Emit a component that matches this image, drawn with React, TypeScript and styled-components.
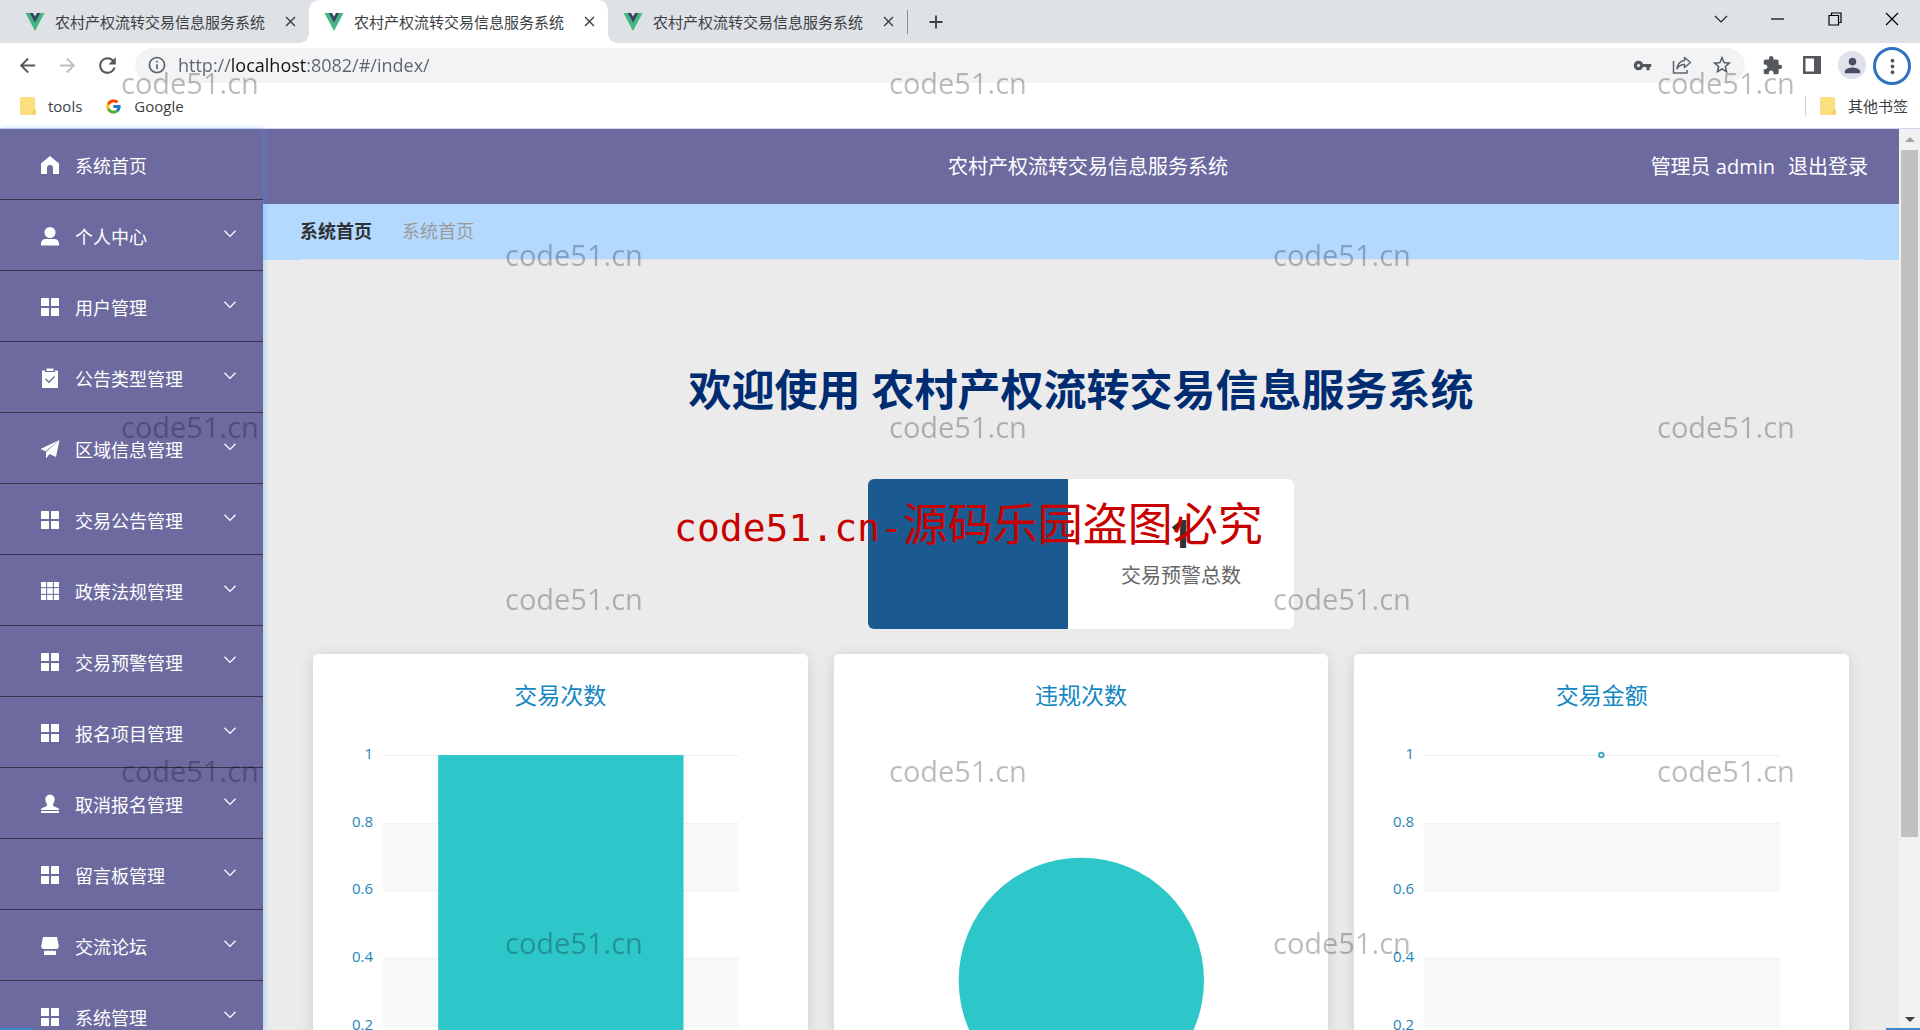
import React from 'react';
import styled, { createGlobalStyle, css } from 'styled-components';
import {
  MdArrowBack,
  MdArrowForward,
  MdRefresh,
  MdInfoOutline,
  MdVpnKey,
  MdStarBorder,
  MdExtension,
  MdPerson,
  MdMoreVert,
  MdAdd,
  MdClose,
} from 'react-icons/md';
import { FcGoogle } from 'react-icons/fc';

const SYSTEM_NAME = '农村产权流转交易信息服务系统';

const GlobalStyle = createGlobalStyle`
  * { box-sizing: border-box; }
  body {
    margin: 0;
    font-family: "Open Sans", "Noto Sans CJK SC", sans-serif;
    color: #333;
    overflow: hidden;
  }
  button {
    border: 0;
    padding: 0;
    background: none;
    font: inherit;
    color: inherit;
    cursor: pointer;
  }
  a { color: inherit; text-decoration: none; }
  h1, h2, p, ul { margin: 0; padding: 0; }
  ul { list-style: none; }
`;

/* ---------- browser window ---------- */

const Window = styled.div`
  position: relative;
  display: flex;
  flex-direction: column;
  height: 100vh;
  overflow: hidden;
  background: #fff;
`;

const TabStrip = styled.div`
  display: flex;
  align-items: stretch;
  flex: none;
  height: 43px;
  padding-left: 10px;
  background: #dee1e6;
`;

const corner = css`
  content: '';
  position: absolute;
  bottom: 0;
  width: 10px;
  height: 10px;
`;

const Tab = styled.div<{ $active?: boolean }>`
  position: relative;
  display: flex;
  align-items: center;
  gap: 10px;
  width: 299px;
  padding: 0 10px 0 15px;
  border-radius: 10px 10px 0 0;
  background: ${(p) => (p.$active ? '#fff' : 'transparent')};
  ${(p) =>
    p.$active &&
    css`
      &::before {
        ${corner}
        right: 100%;
        background: radial-gradient(circle at 0 0, transparent 10px, #fff 10px);
      }
      &::after {
        ${corner}
        left: 100%;
        background: radial-gradient(circle at 100% 0, transparent 10px, #fff 10px);
      }
    `}
`;

const TabTitle = styled.button`
  flex: 1;
  font-size: 15px;
  line-height: 20px;
  text-align: left;
  white-space: nowrap;
  color: #3c4043;
`;

const TabClose = styled.button`
  display: grid;
  place-items: center;
  width: 18px;
  height: 18px;
  font-size: 17px;
  color: #3c4043;
`;

const NewTab = styled.button`
  display: grid;
  place-items: center;
  align-self: center;
  width: 56px;
  height: 24px;
  border-left: 1px solid #8b8f94;
  font-size: 22px;
  color: #3c4043;
`;

const WindowControls = styled.div`
  display: flex;
  margin-left: auto;
  height: 38px;
`;

const WindowControl = styled.button`
  display: grid;
  place-items: center;
  width: 57px;
  height: 38px;
`;

const Toolbar = styled.div`
  display: flex;
  align-items: center;
  flex: none;
  height: 44px;
  padding: 0 8px 0 7px;
  color: #5f6368;
`;

const ToolButton = styled.button<{ $dim?: boolean }>`
  display: grid;
  place-items: center;
  flex: none;
  width: 40px;
  height: 36px;
  font-size: 23px;
  color: ${(p) => (p.$dim ? '#bdc1c6' : '#54585d')};
`;

const Omnibox = styled.div`
  display: flex;
  align-items: center;
  flex: 1;
  height: 35px;
  margin: 0 7px 0 8px;
  padding: 0 3px 0 12px;
  border-radius: 18px;
  background: #f1f3f4;
`;

const Address = styled.input`
  flex: 1;
  min-width: 0;
  height: 28px;
  margin-left: 11px;
  padding: 0;
  border: 0;
  outline: 0;
  font: 18px/28px "Open Sans", sans-serif;
  color: transparent;
  background: linear-gradient(90deg, #5f6368 53px, #111 53px, #111 128px, #5f6368 128px);
  background-clip: text;
  -webkit-background-clip: text;
`;

const Avatar = styled.span`
  display: grid;
  place-items: center;
  width: 28px;
  height: 28px;
  border-radius: 50%;
  background: #dfe2ec;
  color: #474d62;
  font-size: 23px;
`;

const MenuRing = styled.span`
  display: grid;
  place-items: center;
  width: 38px;
  height: 38px;
  border: 3px solid #2f74c0;
  border-radius: 50%;
`;

const BookmarkBar = styled.div`
  display: flex;
  align-items: center;
  flex: none;
  height: 42px;
  padding: 0 12px 3px 20px;
  border-bottom: 1px solid #d3d3ea;
  font-size: 15px;
  line-height: 20px;
`;

const Bookmark = styled.a`
  display: flex;
  align-items: center;
  gap: 12px;
  margin-right: 23px;
  font-size: 15px;
  color: #3c4043;
`;

const OtherBookmarks = styled(Bookmark)`
  margin: 0 0 0 auto;
  padding-left: 14px;
  border-left: 1px solid #d0d3d8;
`;

/* ---------- admin page ---------- */

const Page = styled.div`
  display: flex;
  flex: 1;
  min-height: 0;
  background: #ebebeb;
`;

const Sidebar = styled.nav`
  position: relative;
  flex: none;
  width: 263px;
  overflow: visible;
  background: #6d6aa0;
  box-shadow: 1px 0 6px rgba(64, 158, 255, 0.4);
  color: #fff;
`;

const MenuLink = styled.a`
  display: flex;
  align-items: center;
  gap: 15px;
  height: 71px;
  padding: 2px 27px 0 40px;
  border-bottom: 1px solid #35334f;
  font-size: 18px;
  line-height: 24px;
`;

const MenuLabel = styled.span`
  flex: 1;
  padding-top: 2px;
`;

const MenuArrow = styled.svg`
  margin-bottom: 5px;
`;

const Main = styled.main`
  flex: 1;
  min-width: 0;
  overflow: hidden;
`;

const Header = styled.header`
  display: grid;
  grid-template-columns: 1fr auto 1fr;
  align-items: center;
  height: 75px;
  padding: 0 31px 0 45px;
  background: #6d6aa0;
  color: #fff;
  font-size: 20px;
  line-height: 28px;
`;

const Account = styled.div`
  display: flex;
  justify-content: flex-end;
  gap: 13px;
`;

const Crumbs = styled.div`
  padding: 0 37px;
  background: #b3d9ff;
`;

const CrumbRow = styled.div`
  display: flex;
  align-items: center;
  gap: 30px;
  height: 56px;
  padding-bottom: 1px;
  border-bottom: 1px solid #dfe3e8;
  font-size: 18px;
  line-height: 24px;
  color: #999;
`;

const CurrentCrumb = styled.a`
  font-weight: 700;
  color: #303133;
`;

const Content = styled.div`
  display: flex;
  flex-direction: column;
  align-items: center;
  padding: 100px 50px 0;
`;

const Welcome = styled.h1`
  font-size: 43px;
  line-height: 60px;
  font-weight: 700;
  color: #002c72;
`;

const StatCard = styled.section`
  display: flex;
  height: 150px;
  margin: 59px 0 25px;
  border-radius: 6px;
  overflow: hidden;
  background: #fff;
`;

const StatCover = styled.div`
  width: 200px;
  background: #1b5a90;
`;

const StatBody = styled.div`
  display: flex;
  flex-direction: column;
  align-items: center;
  justify-content: center;
  width: 226px;
  padding-bottom: 10px;
`;

const StatValue = styled.strong`
  font-size: 40px;
  line-height: 54px;
  color: #303133;
`;

const StatLabel = styled.span`
  font-size: 20px;
  line-height: 32px;
  color: #666;
`;

const Charts = styled.div`
  display: grid;
  grid-template-columns: repeat(3, 1fr);
  gap: 26px;
  width: 100%;
`;

const ChartCard = styled.section`
  height: 520px;
  padding-top: 24px;
  border-radius: 5px;
  background: #fff;
  box-shadow: 0 2px 15px rgba(0, 0, 0, 0.12);
`;

const ChartTitle = styled.h2`
  font-size: 23px;
  line-height: 34px;
  font-weight: 400;
  text-align: center;
  color: #1486c2;
`;

const Plot = styled.svg`
  display: block;
  width: 100%;
  font-size: 15px;
  fill: #1d86b8;
`;

const Scrollbar = styled.div`
  display: flex;
  flex-direction: column;
  align-items: center;
  flex: none;
  width: 21px;
  background: #f1f1f1;
`;

const ScrollArrow = styled.button`
  display: grid;
  place-items: center;
  width: 21px;
  height: 21px;
`;

const ScrollTrack = styled.div`
  flex: 1;
  width: 17px;
`;

const ScrollThumb = styled.div`
  height: 80%;
  background: #c1c1c1;
`;

/* ---------- overlays ---------- */

const Watermarks = styled.div`
  position: absolute;
  inset: -3px 0 0;
  overflow: hidden;
  pointer-events: none;
  opacity: 0.26;
`;

const WatermarkRow = styled.div<{ $shifted: boolean }>`
  display: flex;
  align-items: center;
  height: 172px;
  padding-left: ${(p) => (p.$shifted ? 505 : 121)}px;
`;

const Watermark = styled.span`
  flex: none;
  width: 768px;
  font-size: 29px;
  line-height: 40px;
  color: #000;
`;

const Notice = styled.p`
  position: absolute;
  top: 491px;
  left: 674px;
  display: flex;
  align-items: baseline;
  font-size: 45px;
  line-height: 66px;
  white-space: nowrap;
  color: #c80000;
  pointer-events: none;
`;

const NoticeSite = styled.span`
  font-family: "DejaVu Sans Mono", monospace;
  font-size: 38px;
`;

const EdgeStrip = styled.div<{ $side: 'left' | 'right' }>`
  position: absolute;
  bottom: 0;
  ${(p) => p.$side}: 0;
  width: 34px;
  height: 2px;
  background: #3f86cf;
`;

/* ---------- drawings ---------- */

const VueLogo = () => (
  <svg width="20" height="18" viewBox="0 0 19 18">
    <path d="M0 0h4l5.500 10L15 0h4L9.500 18z" fill="#41b883" />
    <path d="M4 0h3.500l2 3.500L11.500 0H15L9.500 10z" fill="#35495e" />
  </svg>
);

const Folder = () => (
  <svg width="16" height="18" viewBox="0 0 16 18">
    <path d="M2 0h11a2 2 0 0 1 2 2v10l1 1v4l-1 1H2a2 2 0 0 1-2-2V2a2 2 0 0 1 2-2z" fill="#fbdf7e" />
    <path d="M13 18v-4.500a1.300 1.300 0 0 1 2.600 0V17l-1 1z" fill="#f2cd5c" />
  </svg>
);

const Chevron = () => (
  <MenuArrow width="12" height="8" viewBox="0 0 12 8" fill="none" stroke="#fff" strokeWidth="1.300">
    <path d="M.5 .8 6 6.400 11.500.8" />
  </MenuArrow>
);

type IconName = 'home' | 'user' | 'menu' | 'claim' | 'promotion' | 'grid' | 'stamp' | 'shop';

const iconShapes: Record<IconName, React.ReactNode> = {
  home: <path d="M10 1 1 8.500V19h6v-6a3 3 0 0 1 6 0v6h6V8.500z" />,
  user: (
    <>
      <circle cx="10" cy="6.500" r="5.500" />
      <path d="M1 19.500v-2a4.500 4.500 0 0 1 4.500-4.500h9a4.500 4.500 0 0 1 4.500 4.500v2z" />
    </>
  ),
  menu: (
    <>
      <rect x="1" y="1" width="8" height="8" rx=".6" />
      <rect x="11" y="1" width="8" height="8" rx=".6" />
      <rect x="1" y="11" width="8" height="8" rx=".6" />
      <rect x="11" y="11" width="8" height="8" rx=".6" />
    </>
  ),
  claim: (
    <>
      <path d="M2 2.500h3V4h10V2.500h3V20H2z" />
      <rect x="6.500" y=".5" width="7" height="2.500" />
      <path d="m5.500 11 3.500 3.300 5.500-5.800" fill="none" stroke="#6d6aa0" strokeWidth="1.300" />
    </>
  ),
  promotion: (
    <>
      <path d="M19.500 1 .5 10l5 2.300z" />
      <path d="M19.500 1 6 13v6.500l3.500-4.500 6.500 3z" />
    </>
  ),
  grid: (
    <>
      {[1, 7, 13.6].map((y, row) =>
        [1, 7, 13.6].map((x, col) => (
          <rect key={`${x}-${y}`} x={x} y={y} width={col === 1 ? 6 : 5.4} height={row === 1 ? 6 : 5.4} />
        )),
      )}
      <path d="M6.700 1v18M13.300 1v18M1 6.700h18M1 13.300h18" stroke="#6d6aa0" strokeWidth=".8" />
    </>
  ),
  stamp: (
    <>
      <path d="M10 .5a4.800 4.800 0 0 1 4.700 5c0 2.500-1.700 3.500-1.700 5.500 0 1.200 1 1.700 3 2.200 2 .5 3 1.300 3 2.800H1c0-1.500 1-2.300 3-2.800 2-.5 3-1 3-2.200 0-2-1.700-3-1.700-5.500A4.800 4.800 0 0 1 10 .5z" />
      <rect x="1" y="17" width="18" height="2" />
    </>
  ),
  shop: (
    <>
      <path d="M3 1h14l1.800 9.500A2.800 2.800 0 0 1 16 13H4a2.800 2.800 0 0 1-2.800-2.500z" />
      <path d="M4 14.500c2 1 3.500.5 4-.3 1 1 3 1 4 0 .8.800 2.500 1.200 4 .3V19H4z" />
    </>
  ),
};

const MenuIcon = ({ name }: { name: IconName }) => (
  <svg width="20" height="20" viewBox="0 0 20 20" fill="#fff" aria-hidden="true">
    {iconShapes[name]}
  </svg>
);

const ShareIcon = () => (
  <svg width="20" height="20" viewBox="0 0 20 20" fill="none" stroke="#5f6368" strokeWidth="1.500">
    <path d="M1.500 6v12H15v-3" />
    <path d="M12.500 2.500 18.500 7.500l-6 5V9.500C9 9.500 6.500 11 5 14c0-4 2.500-8 7.500-8.500z" strokeLinejoin="round" />
  </svg>
);

const SidePanelIcon = () => (
  <svg width="18" height="18" viewBox="0 0 18 18">
    <path d="M0 0h18v18H0zM2.500 2.500v13h8.500v-13z" fillRule="evenodd" fill="#54585d" />
  </svg>
);

/* ---------- data ---------- */

const tabs = [{ id: 1 }, { id: 2, active: true }, { id: 3 }];

const menu: { label: string; icon: IconName }[] = [
  { label: '系统首页', icon: 'home' },
  { label: '个人中心', icon: 'user' },
  { label: '用户管理', icon: 'menu' },
  { label: '公告类型管理', icon: 'claim' },
  { label: '区域信息管理', icon: 'promotion' },
  { label: '交易公告管理', icon: 'menu' },
  { label: '政策法规管理', icon: 'grid' },
  { label: '交易预警管理', icon: 'menu' },
  { label: '报名项目管理', icon: 'menu' },
  { label: '取消报名管理', icon: 'stamp' },
  { label: '留言板管理', icon: 'menu' },
  { label: '交流论坛', icon: 'shop' },
  { label: '系统管理', icon: 'menu' },
];

const PLOT_TOP = 43;
const PLOT_STEP = 67.6;
const ticks = ['1', '0.8', '0.6', '0.4', '0.2', '0'];

const Axes = () => (
  <>
    {ticks.map((tick, i) => {
      const y = PLOT_TOP + i * PLOT_STEP;
      return (
        <g key={tick}>
          {i % 2 === 1 && i < 5 && <rect x="70" y={y} width="355" height={PLOT_STEP} fill="#f9f9f9" />}
          <path d={`M70 ${Math.round(y) + 0.5}h355`} stroke="#eee" />
          <text x="60" y={y + 4} textAnchor="end">{tick}</text>
        </g>
      );
    })}
  </>
);

export default function App() {
  return (
    <Window>
      <GlobalStyle />
      <TabStrip>
        {tabs.map((tab) => (
          <Tab key={tab.id} $active={tab.active}>
            <VueLogo />
            <TabTitle>{SYSTEM_NAME}</TabTitle>
            <TabClose aria-label="关闭标签页"><MdClose /></TabClose>
          </Tab>
        ))}
        <NewTab aria-label="新标签页"><MdAdd /></NewTab>
        <WindowControls>
          <WindowControl aria-label="搜索标签页">
            <svg width="14" height="8" fill="none" stroke="#222" strokeWidth="1.200"><path d="M1 1l6 6 6-6" /></svg>
          </WindowControl>
          <WindowControl aria-label="最小化">
            <svg width="13" height="2"><path d="M0 1h13" stroke="#000" strokeWidth="1.200" /></svg>
          </WindowControl>
          <WindowControl aria-label="还原">
            <svg width="14" height="14" fill="none" stroke="#000" strokeWidth="1.200">
              <path d="M1 3.500h9.500V13H1zM3.500 3.500V1H13v9.500h-2.500" />
            </svg>
          </WindowControl>
          <WindowControl aria-label="关闭">
            <svg width="14" height="14" fill="none" stroke="#000" strokeWidth="1.200"><path d="M1 1l12 12M13 1 1 13" /></svg>
          </WindowControl>
        </WindowControls>
      </TabStrip>

      <Toolbar>
        <ToolButton aria-label="后退"><MdArrowBack /></ToolButton>
        <ToolButton aria-label="前进" $dim><MdArrowForward /></ToolButton>
        <ToolButton aria-label="刷新"><MdRefresh size={25} /></ToolButton>
        <Omnibox>
          <MdInfoOutline size={20} />
          <Address aria-label="地址" defaultValue="http://localhost:8082/#/index/" />
          <ToolButton aria-label="密码"><MdVpnKey size={19} /></ToolButton>
          <ToolButton aria-label="分享"><ShareIcon /></ToolButton>
          <ToolButton aria-label="收藏"><MdStarBorder size={22} /></ToolButton>
        </Omnibox>
        <ToolButton aria-label="扩展程序"><MdExtension size={21} /></ToolButton>
        <ToolButton aria-label="侧边栏"><SidePanelIcon /></ToolButton>
        <ToolButton aria-label="用户"><Avatar><MdPerson /></Avatar></ToolButton>
        <ToolButton aria-label="菜单"><MenuRing><MdMoreVert /></MenuRing></ToolButton>
      </Toolbar>

      <BookmarkBar>
        <Bookmark href="#tools"><Folder />tools</Bookmark>
        <Bookmark href="#google"><FcGoogle size={17} />Google</Bookmark>
        <OtherBookmarks href="#others"><Folder />其他书签</OtherBookmarks>
      </BookmarkBar>

      <Page>
        <Sidebar>
          <ul>
            {menu.map((item, i) => (
              <li key={item.label}>
                <MenuLink href="#/index/">
                  <MenuIcon name={item.icon} />
                  <MenuLabel>{item.label}</MenuLabel>
                  {i > 0 && <Chevron />}
                </MenuLink>
              </li>
            ))}
          </ul>
        </Sidebar>

        <Main>
          <Header>
            <span />
            <span>{SYSTEM_NAME}</span>
            <Account>
              <span>管理员 admin</span>
              <a href="#logout">退出登录</a>
            </Account>
          </Header>
          <Crumbs>
            <CrumbRow>
              <CurrentCrumb href="#/index/">系统首页</CurrentCrumb>
              <span>系统首页</span>
            </CrumbRow>
          </Crumbs>

          <Content>
            <Welcome>欢迎使用 {SYSTEM_NAME}</Welcome>
            <StatCard>
              <StatCover />
              <StatBody>
                <StatValue>1</StatValue>
                <StatLabel>交易预警总数</StatLabel>
              </StatBody>
            </StatCard>

            <Charts>
              <ChartCard>
                <ChartTitle>交易次数</ChartTitle>
                <Plot viewBox="0 0 494 440">
                  <Axes />
                  <rect x="125" y={PLOT_TOP} width="245" height={PLOT_STEP * 5} fill="#2ec7c9" />
                </Plot>
              </ChartCard>
              <ChartCard>
                <ChartTitle>违规次数</ChartTitle>
                <Plot viewBox="0 0 494 440">
                  <circle cx="247" cy="268" r="122.500" fill="#2ec7c9" />
                </Plot>
              </ChartCard>
              <ChartCard>
                <ChartTitle>交易金额</ChartTitle>
                <Plot viewBox="0 0 494 440">
                  <Axes />
                  <circle cx="247" cy={PLOT_TOP} r="2.300" fill="#fff" stroke="#3ba6c4" strokeWidth="1.800" />
                </Plot>
              </ChartCard>
            </Charts>
          </Content>
        </Main>

        <Scrollbar>
          <ScrollArrow aria-label="向上滚动">
            <svg width="10" height="5"><path d="M0 5 5 0l5 5z" fill="#a3a3a3" /></svg>
          </ScrollArrow>
          <ScrollTrack><ScrollThumb /></ScrollTrack>
          <ScrollArrow aria-label="向下滚动">
            <svg width="10" height="5"><path d="M0 0h10L5 5z" fill="#404040" /></svg>
          </ScrollArrow>
        </Scrollbar>
      </Page>

      <Watermarks aria-hidden="true">
        {[0, 1, 2, 3, 4, 5].map((row) => (
          <WatermarkRow key={row} $shifted={row % 2 === 1}>
            {Array.from({ length: row % 2 === 1 ? 2 : 3 }, (_, i) => (
              <Watermark key={i}>code51.cn</Watermark>
            ))}
          </WatermarkRow>
        ))}
      </Watermarks>
      <Notice>
        <NoticeSite>code51.cn-</NoticeSite>
        <span>源码乐园盗图必究</span>
      </Notice>
      <EdgeStrip $side="left" />
      <EdgeStrip $side="right" />
    </Window>
  );
}
